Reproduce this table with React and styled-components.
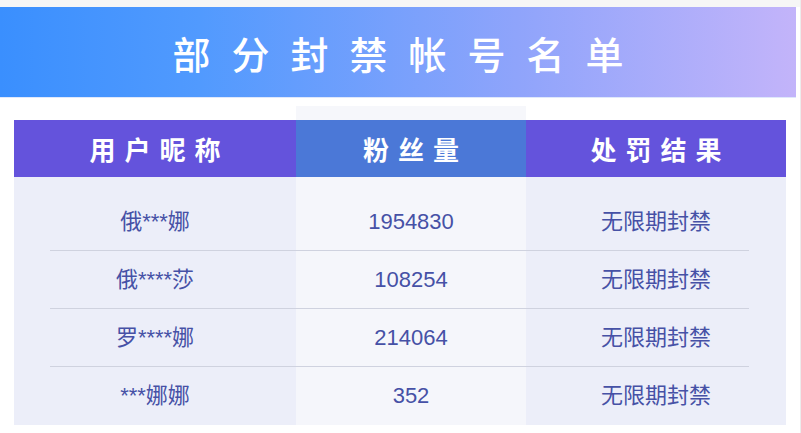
import React from 'react';
import styled, { createGlobalStyle } from 'styled-components';

const GlobalStyle = createGlobalStyle`
  html, body {
    margin: 0;
    padding: 0;
    background: #ffffff;
  }
  body {
    font-family: "Liberation Sans", "Noto Sans CJK SC", sans-serif;
  }
`;

const Page = styled.div`
  width: 801px;
  height: 433px;
  box-sizing: border-box;
  padding: 7px 4px 0 0;
  background: linear-gradient(to bottom, #f6f6f6 0, #f6f6f6 7px, #ffffff 7px);
  border-right: 1px solid #ececec;
  overflow: hidden;
`;

const Banner = styled.header`
  height: 90px;
  display: flex;
  align-items: center;
  justify-content: center;
  background: linear-gradient(to right, #3a8ffe 0%, #519afe 25%, #8fa4fb 65%, #c3b4fa 100%);
  box-shadow: 0 1px 0 #dfe8fb;
`;

const Title = styled.h1`
  margin: 0;
  padding-left: 21px;
  font-family: "Noto Sans CJK SC", sans-serif;
  font-size: 38px;
  font-weight: 500;
  letter-spacing: 21px;
  color: #ffffff;
`;

const Table = styled.section`
  margin: 9px 0 0 14px;
  width: 772px;
`;

const Grid = styled.div`
  position: relative;
  display: grid;
  grid-template-columns: 282px 230px 260px;
  height: ${(p) => p.$h}px;
`;

const Cap = styled.div`
  background: ${(p) => (p.$mid ? '#f6f7fb' : 'transparent')};
`;

const HeadCell = styled.div`
  display: flex;
  align-items: center;
  justify-content: center;
  padding-left: 9px;
  background: ${(p) => (p.$mid ? '#4b78d7' : '#6453dc')};
  font-family: "Noto Sans CJK SC", sans-serif;
  font-size: 26px;
  font-weight: 700;
  letter-spacing: 9px;
  color: #ffffff;
`;

const Row = styled(Grid)`
  &::after {
    content: '';
    display: ${(p) => (p.$last ? 'none' : 'block')};
    position: absolute;
    left: 36px;
    right: 37px;
    bottom: 0;
    height: 1px;
    background: #cfd2df;
  }
`;

const Cell = styled.div`
  display: flex;
  align-items: center;
  justify-content: center;
  background: ${(p) => (p.$mid ? '#f5f6fb' : '#eceef9')};
  font-size: 22px;
  line-height: 1;
  color: #4651a6;
`;

const columns = ['用户昵称', '粉丝量', '处罚结果'];

const rows = [
  ['俄***娜', '1954830', '无限期封禁'],
  ['俄****莎', '108254', '无限期封禁'],
  ['罗****娜', '214064', '无限期封禁'],
  ['***娜娜', '352', '无限期封禁'],
];

function App() {
  return (
    <Page>
      <GlobalStyle />
      <Banner>
        <Title>部分封禁帐号名单</Title>
      </Banner>
      <Table>
        <Grid $h={14}>
          <Cap />
          <Cap $mid />
          <Cap />
        </Grid>
        <Grid $h={57}>
          {columns.map((c, i) => (
            <HeadCell key={c} $mid={i === 1}>{c}</HeadCell>
          ))}
        </Grid>
        <Grid $h={16}>
          <Cell />
          <Cell $mid />
          <Cell />
        </Grid>
        {rows.map((r, ri) => (
          <Row key={ri} $h={58} $last={ri === rows.length - 1}>
            {r.map((v, i) => (
              <Cell key={i} $mid={i === 1}>{v}</Cell>
            ))}
          </Row>
        ))}
      </Table>
    </Page>
  );
}

export default App;
